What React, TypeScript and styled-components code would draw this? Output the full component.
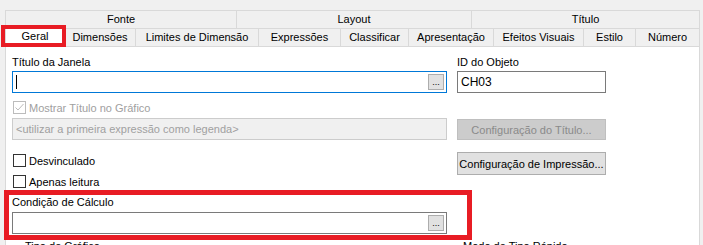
import React from 'react';
import styled, { createGlobalStyle } from 'styled-components';

const GlobalStyle = createGlobalStyle`
  html, body { margin: 0; padding: 0; background: #f0f0f0; }
  body {
    font-family: "Liberation Sans", Arial, sans-serif;
    font-size: 11px;
    color: #000;
  }
  * { box-sizing: border-box; }
`;

const Window = styled.div`
  position: relative;
  width: 703px;
  height: 245px;
  overflow: hidden;
  background: #f0f0f0;
  padding-top: 10px;
`;

const TabRow = styled.div`
  display: flex;
  margin-left: 5px;
  height: 18px;
`;

const Tab = styled.div<{ $w: number; $selected?: boolean }>`
  position: relative;
  width: ${(p) => p.$w}px;
  flex: none;
  height: ${(p) => (p.$selected ? 21 : 18)}px;
  margin-top: ${(p) => (p.$selected ? -2 : 0)}px;
  z-index: ${(p) => (p.$selected ? 2 : 0)};
  background: ${(p) => (p.$selected ? '#ffffff' : '#f0f0f0')};
  border-top: 1px solid #d9d9d9;
  border-left: 1px solid #d9d9d9;
  display: flex;
  align-items: center;
  justify-content: center;
  line-height: 15px;
  padding-bottom: ${(p) => (p.$selected ? 2 : 0)}px;
  white-space: nowrap;
  &:last-child {
    border-right: 1px solid #d9d9d9;
  }
`;

const Highlight = styled.div<{ $t: number; $r: number; $b: number; $l: number; $bw: number }>`
  position: absolute;
  top: ${(p) => p.$t}px;
  right: ${(p) => p.$r}px;
  bottom: ${(p) => p.$b}px;
  left: ${(p) => p.$l}px;
  border: ${(p) => p.$bw}px solid #e81c24;
  pointer-events: none;
  z-index: 5;
`;

const Panel = styled.div`
  margin-left: 5px;
  width: 695px;
  height: 199px;
  background: #ffffff;
  border: 1px solid #d9d9d9;
  border-bottom: none;
  padding: 8px 0 0 6px;
`;

const Content = styled.div`
  display: grid;
  grid-template-columns: 435px 149px;
  column-gap: 10px;
`;

const Column = styled.div`
  display: flex;
  flex-direction: column;
`;

const Label = styled.div<{ $mt?: number }>`
  height: 15px;
  line-height: 15px;
  margin-top: ${(p) => p.$mt ?? 0}px;
  white-space: nowrap;
`;

const TextBox = styled.div<{ $focused?: boolean; $mt?: number }>`
  height: 22px;
  margin-top: ${(p) => p.$mt ?? 1}px;
  border: 1px solid ${(p) => (p.$focused ? '#0078d7' : '#7a7a7a')};
  background: #ffffff;
  display: flex;
  align-items: center;
  padding-left: 3px;
  padding-right: 2px;
  font-size: 12px;
`;

const DisabledBox = styled.div<{ $mt?: number }>`
  height: 22px;
  margin-top: ${(p) => p.$mt ?? 0}px;
  border: 1px solid #cccccc;
  background: #f0f0f0;
  color: #a0a0a0;
  display: flex;
  align-items: center;
  padding-left: 3px;
  white-space: nowrap;
`;

const Caret = styled.span`
  width: 1px;
  height: 14px;
  background: #000;
`;

const EllipsisButton = styled.div`
  margin-left: auto;
  width: 16px;
  height: 16px;
  background: #e1e1e1;
  border: 1px solid #adadad;
  display: flex;
  align-items: flex-end;
  justify-content: center;
  font-size: 9px;
  line-height: 9px;
  padding-bottom: 2px;
  color: #000;
`;

const CheckRow = styled.div<{ $mt?: number; $disabled?: boolean }>`
  display: flex;
  align-items: center;
  height: 15px;
  margin-top: ${(p) => p.$mt ?? 0}px;
  padding-left: 1px;
  color: ${(p) => (p.$disabled ? '#a0a0a0' : '#000')};
  white-space: nowrap;
`;

const CheckBox = styled.span<{ $disabled?: boolean }>`
  width: 13px;
  height: 13px;
  flex: none;
  margin-right: 3px;
  border: 1px solid ${(p) => (p.$disabled ? '#bcbcbc' : '#333333')};
  background: #ffffff;
  display: flex;
  align-items: center;
  justify-content: center;
`;

const Button = styled.div<{ $disabled?: boolean; $h: number; $mt: number }>`
  height: ${(p) => p.$h}px;
  margin-top: ${(p) => p.$mt}px;
  background: ${(p) => (p.$disabled ? '#cccccc' : '#e1e1e1')};
  border: 1px solid ${(p) => (p.$disabled ? '#bfbfbf' : '#adadad')};
  color: ${(p) => (p.$disabled ? '#8a8a8a' : '#000')};
  display: flex;
  align-items: center;
  justify-content: center;
  white-space: nowrap;
`;

const CalcSection = styled.div`
  position: relative;
  margin-top: 6px;
  display: flex;
  flex-direction: column;
`;

const GroupRow = styled.div`
  grid-column: 1 / span 2;
  display: grid;
  grid-template-columns: 435px 149px;
  column-gap: 10px;
  margin-top: 5px;
`;

const GroupLegend = styled.div<{ $indent: number }>`
  display: flex;
  align-items: center;
  height: 15px;
  line-height: 15px;
  padding-left: ${(p) => p.$indent}px;
  white-space: nowrap;
`;

const GroupLine = styled.span`
  width: 7px;
  height: 1px;
  background: #d9d9d9;
  margin-right: 3px;
  align-self: flex-end;
  margin-bottom: 2px;
`;

const CheckMark = () => (
  <svg width="11" height="11" viewBox="0 0 11 11">
    <polyline points="1.5,5.5 4,8 9.5,2" fill="none" stroke="#bcbcbc" strokeWidth="1" />
  </svg>
);

const groupTabs: [string, number][] = [
  ['Fonte', 231],
  ['Layout', 235],
  ['Título', 229],
];

const tabs: [string, number][] = [
  ['Geral', 59],
  ['Dimensões', 71],
  ['Limites de Dimensão', 123],
  ['Expressões', 82],
  ['Classificar', 68],
  ['Apresentação', 85],
  ['Efeitos Visuais', 90],
  ['Estilo', 52],
  ['Número', 65],
];

export default function App() {
  return (
    <Window>
      <GlobalStyle />
      <TabRow>
        {groupTabs.map(([name, w]) => (
          <Tab key={name} $w={w}>
            {name}
          </Tab>
        ))}
      </TabRow>
      <TabRow>
        {tabs.map(([name, w], i) => (
          <Tab key={name} $w={w} $selected={i === 0}>
            {name}
            {i === 0 && <Highlight $t={-2} $r={-2} $b={0} $l={-5} $bw={4} />}
          </Tab>
        ))}
      </TabRow>
      <Panel>
        <Content>
          <Column>
            <Label>Título da Janela</Label>
            <TextBox $focused>
              <Caret />
              <EllipsisButton>...</EllipsisButton>
            </TextBox>
            <CheckRow $mt={7} $disabled>
              <CheckBox $disabled>
                <CheckMark />
              </CheckBox>
              Mostrar Título no Gráfico
            </CheckRow>
            <DisabledBox $mt={3}>&lt;utilizar a primeira expressão como legenda&gt;</DisabledBox>
            <CheckRow $mt={13}>
              <CheckBox />
              Desvinculado
            </CheckRow>
            <CheckRow $mt={6}>
              <CheckBox />
              Apenas leitura
            </CheckRow>
            <CalcSection>
              <Label>Condição de Cálculo</Label>
              <TextBox $mt={2}>
                <EllipsisButton>...</EllipsisButton>
              </TextBox>
              <Highlight $t={-5} $r={-25} $b={-6} $l={-8} $bw={5} />
            </CalcSection>
          </Column>
          <Column>
            <Label>ID do Objeto</Label>
            <TextBox>CH03</TextBox>
            <Button $disabled $h={21} $mt={26}>
              Configuração do Título...
            </Button>
            <Button $h={23} $mt={12}>
              Configuração de Impressão...
            </Button>
          </Column>
          <GroupRow>
            <GroupLegend $indent={3}>
              <GroupLine />
              Tipo de Gráfico
            </GroupLegend>
            <GroupLegend $indent={6}>Modo de Tipo Rápido</GroupLegend>
          </GroupRow>
        </Content>
      </Panel>
    </Window>
  );
}
